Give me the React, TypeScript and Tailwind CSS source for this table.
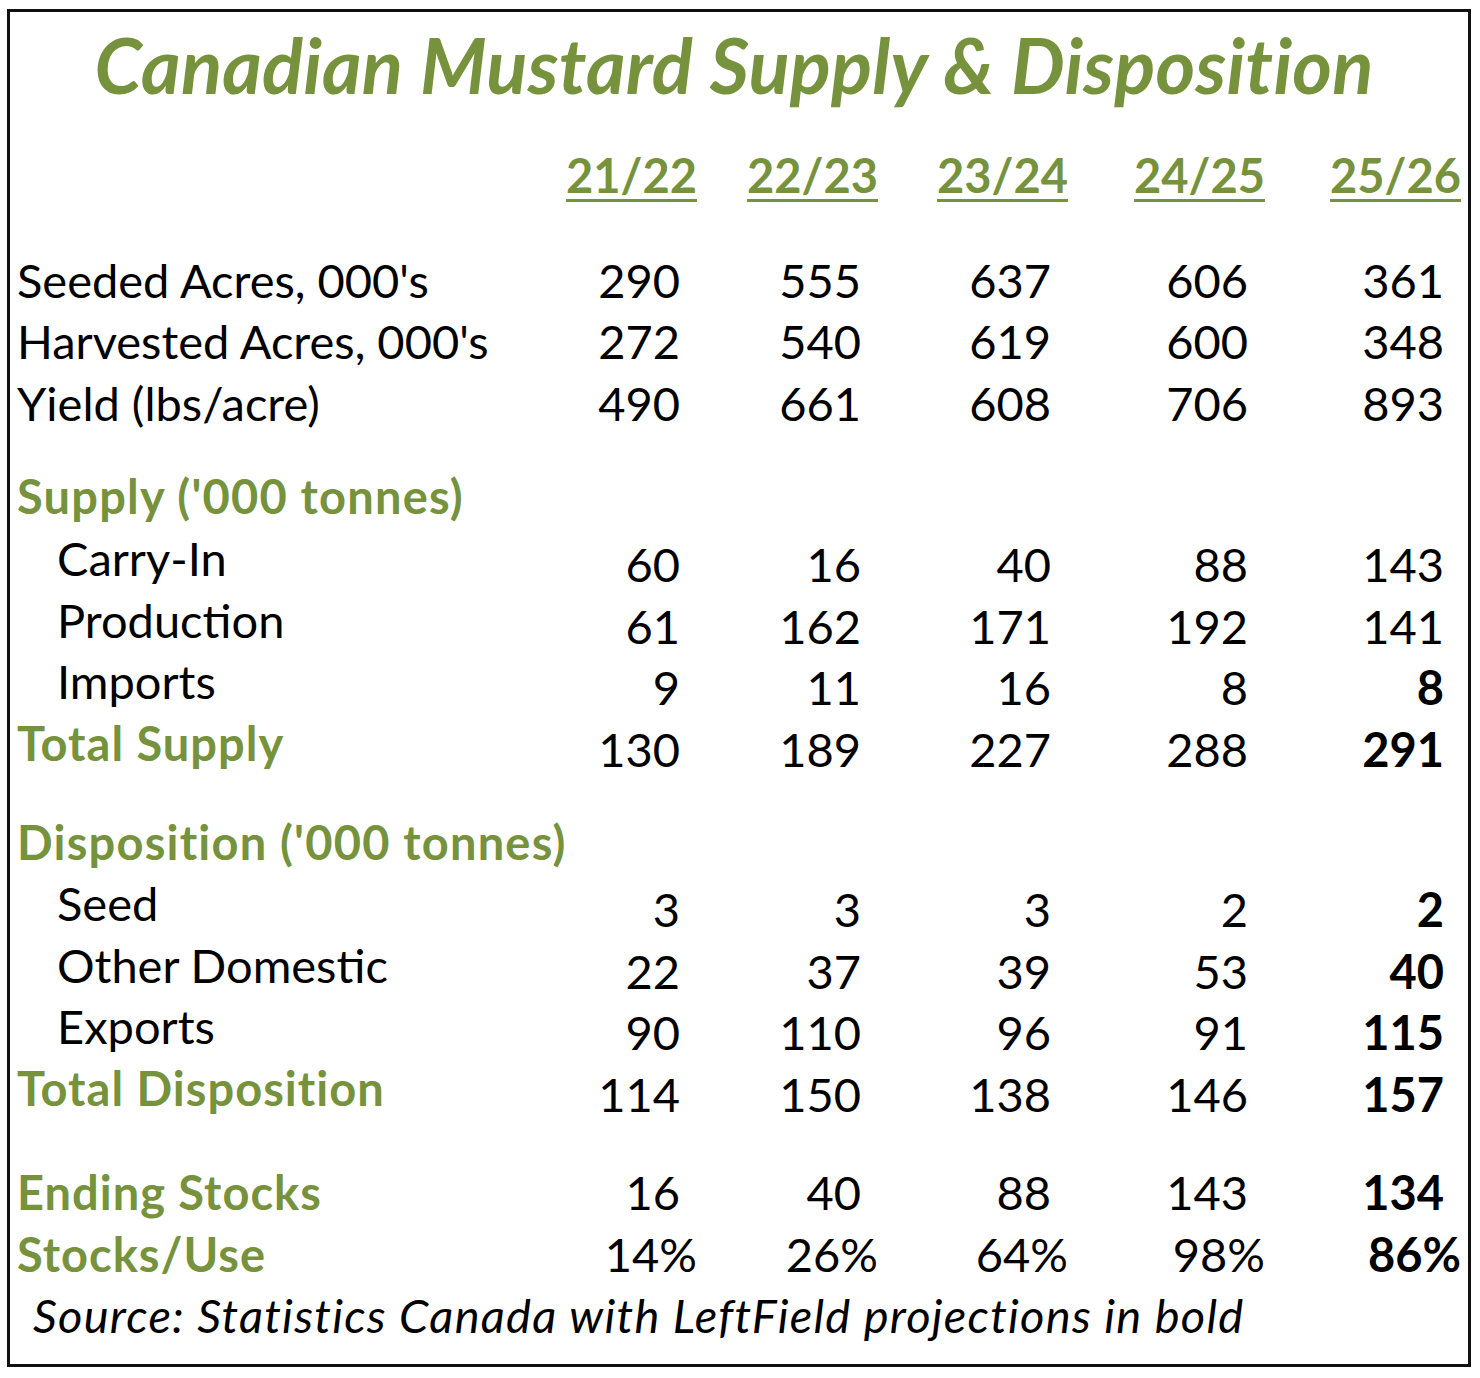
import React from "react"

const GREEN = "text-[#76923C]"
const GRID = "grid grid-cols-[506px_181px_181px_190px_197px_196px] items-center"

type Row = {
  label: string
  vals: string[]
  indent?: boolean
  green?: boolean
  boldLast?: boolean
  pct?: boolean
  lift?: boolean
}

const top: Row[] = [
  { label: "Seeded Acres, 000's", vals: ["290", "555", "637", "606", "361"] },
  { label: "Harvested Acres, 000's", vals: ["272", "540", "619", "600", "348"] },
  { label: "Yield (lbs/acre)", vals: ["490", "661", "608", "706", "893"] },
]

const supply: Row[] = [
  { label: "Carry-In", vals: ["60", "16", "40", "88", "143"], indent: true, lift: true },
  { label: "Production", vals: ["61", "162", "171", "192", "141"], indent: true, lift: true },
  { label: "Imports", vals: ["9", "11", "16", "8", "8"], indent: true, boldLast: true, lift: true },
  { label: "Total Supply", vals: ["130", "189", "227", "288", "291"], green: true, boldLast: true, lift: true },
]

const disp: Row[] = [
  { label: "Seed", vals: ["3", "3", "3", "2", "2"], indent: true, boldLast: true, lift: true },
  { label: "Other Domestic", vals: ["22", "37", "39", "53", "40"], indent: true, boldLast: true, lift: true },
  { label: "Exports", vals: ["90", "110", "96", "91", "115"], indent: true, boldLast: true, lift: true },
  { label: "Total Disposition", vals: ["114", "150", "138", "146", "157"], green: true, boldLast: true, lift: true },
]

const stocks: Row[] = [
  { label: "Ending Stocks", vals: ["16", "40", "88", "143", "134"], green: true, boldLast: true },
  { label: "Stocks/Use", vals: ["14%", "26%", "64%", "98%", "86%"], green: true, boldLast: true, pct: true },
]

function DataRow({ row }: { row: Row }) {
  return (
    <div className={`${GRID} h-[61.5px]`}>
      <div
        className={`whitespace-nowrap ${row.indent ? "pl-[47px]" : "pl-[7px]"} ${
          row.green ? `${GREEN} font-bold tracking-[1px]` : "text-black"
        } ${row.lift ? "-translate-y-[6px]" : ""}`}
      >
        {row.label}
      </div>
      {row.vals.map((v, i) => (
        <div
          key={i}
          className={`text-right text-black ${row.pct ? "" : "pr-[17px]"} ${
            row.boldLast && i === 4 ? "font-bold" : ""
          }`}
        >
          {v}
        </div>
      ))}
    </div>
  )
}

function Heading({ label }: { label: string }) {
  return (
    <div className={`${GRID} h-[61.5px]`}>
      <div className={`whitespace-nowrap pl-[7px] font-bold tracking-[1.2px] ${GREEN}`}>
        {label}
      </div>
    </div>
  )
}

export default function App() {
  return (
    <div className="bg-white w-[1480px] h-[1378px] pt-[9px] pl-[7px]">
      <div
        className="w-[1464px] h-[1358px] border-[3px] border-[#111] text-[47px] leading-none"
        style={{ fontFamily: "Lato, 'Open Sans', sans-serif" }}
      >
        <div className="h-[106px] flex items-center justify-center">
          <h1 className={`italic font-bold text-[76px] tracking-[0.2px] ${GREEN} pr-[10px]`}>
            Canadian Mustard Supply &amp; Disposition
          </h1>
        </div>

        <div className={`${GRID} h-[62px] mt-[26px]`}>
          <div />
          {["21/22", "22/23", "23/24", "24/25", "25/26"].map((y) => (
            <div key={y} className="text-right">
              <span
                className={`font-bold ${GREEN} underline decoration-[3px] underline-offset-[6px]`}
              >
                {y}
              </span>
            </div>
          ))}
        </div>

        <div className="mt-[43.5px]">
          {top.map((r) => (
            <DataRow key={r.label} row={r} />
          ))}
        </div>

        <div className="mt-[32px]">
          <Heading label="Supply ('000 tonnes)" />
        </div>
        <div className="mt-[6.5px]">
          {supply.map((r) => (
            <DataRow key={r.label} row={r} />
          ))}
        </div>

        <div className="mt-[32px]">
          <Heading label="Disposition ('000 tonnes)" />
        </div>
        <div className="mt-[5.5px]">
          {disp.map((r) => (
            <DataRow key={r.label} row={r} />
          ))}
        </div>

        <div className="mt-[37px]">
          {stocks.map((r) => (
            <DataRow key={r.label} row={r} />
          ))}
        </div>

        <div className="h-[61.5px] flex items-center pl-[23px] italic text-black tracking-[1.25px]">
          Source: Statistics Canada with LeftField projections in bold
        </div>
      </div>
    </div>
  )
}
